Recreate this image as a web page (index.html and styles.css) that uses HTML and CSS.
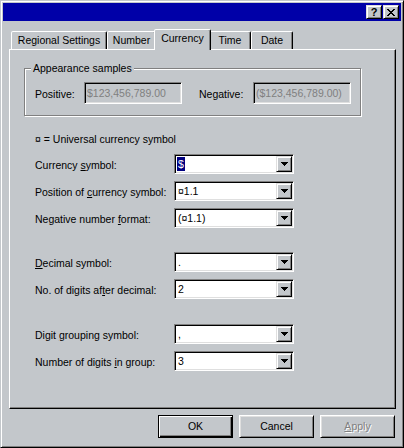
FILE: index.html
```html
<!DOCTYPE html>
<html>
<head>
<meta charset="utf-8">
<title>Regional Settings Properties</title>
<link rel="stylesheet" href="styles.css">
</head>
<body>
<div class="window">
  <div class="titlebar">
    <div class="cap-btn help">?</div>
    <div class="cap-btn close">
      <svg width="8" height="7" viewBox="0 0 8 7" shape-rendering="crispEdges"><path d="M0 0h2v1H0z M6 0h2v1H6z M1 1h2v1H1z M5 1h2v1H5z M2 2h4v1H2z M3 3h2v1H3z M2 4h4v1H2z M1 5h2v1H1z M5 5h2v1H5z M0 6h2v1H0z M6 6h2v1H6z" fill="#000"/></svg>
    </div>
  </div>
  <div class="content">
    <div class="tabs">
      <div class="tab w-regional">Regional Settings</div>
      <div class="tab w-number">Number</div>
      <div class="tab w-currency selected">Currency</div>
      <div class="tab w-time">Time</div>
      <div class="tab w-date">Date</div>
    </div>
    <div class="panel">
      <div class="group">
        <div class="legend">Appearance samples</div>
        <div class="samples">
          <span class="lbl-pos">Positive:</span>
          <div class="field">$123,456,789.00</div>
          <span class="lbl-neg">Negative:</span>
          <div class="field">($123,456,789.00)</div>
        </div>
      </div>
      <div class="note">¤ = Universal currency symbol</div>

      <div class="set first">
        <div class="row"><span class="lbl">Currency <u>s</u>ymbol:</span><div class="combo"><span class="val"><span class="sel">$</span></span><span class="drop"><svg width="7" height="4" viewBox="0 0 7 4" shape-rendering="crispEdges"><path d="M0 0h7v1H0z M1 1h5v1H1z M2 2h3v1H2z M3 3h1v1H3z" fill="#000"/></svg></span></div></div>
        <div class="row"><span class="lbl">Position of <u>c</u>urrency symbol:</span><div class="combo"><span class="val">¤1.1</span><span class="drop"><svg width="7" height="4" viewBox="0 0 7 4" shape-rendering="crispEdges"><path d="M0 0h7v1H0z M1 1h5v1H1z M2 2h3v1H2z M3 3h1v1H3z" fill="#000"/></svg></span></div></div>
        <div class="row"><span class="lbl">Negative number <u>f</u>ormat:</span><div class="combo"><span class="val">(¤1.1)</span><span class="drop"><svg width="7" height="4" viewBox="0 0 7 4" shape-rendering="crispEdges"><path d="M0 0h7v1H0z M1 1h5v1H1z M2 2h3v1H2z M3 3h1v1H3z" fill="#000"/></svg></span></div></div>
      </div>

      <div class="set second">
        <div class="row"><span class="lbl"><u>D</u>ecimal symbol:</span><div class="combo"><span class="val">.</span><span class="drop"><svg width="7" height="4" viewBox="0 0 7 4" shape-rendering="crispEdges"><path d="M0 0h7v1H0z M1 1h5v1H1z M2 2h3v1H2z M3 3h1v1H3z" fill="#000"/></svg></span></div></div>
        <div class="row"><span class="lbl">No. of digits af<u>t</u>er decimal:</span><div class="combo"><span class="val">2</span><span class="drop"><svg width="7" height="4" viewBox="0 0 7 4" shape-rendering="crispEdges"><path d="M0 0h7v1H0z M1 1h5v1H1z M2 2h3v1H2z M3 3h1v1H3z" fill="#000"/></svg></span></div></div>
      </div>

      <div class="set third">
        <div class="row"><span class="lbl">Digit <u>g</u>rouping symbol:</span><div class="combo"><span class="val">,</span><span class="drop"><svg width="7" height="4" viewBox="0 0 7 4" shape-rendering="crispEdges"><path d="M0 0h7v1H0z M1 1h5v1H1z M2 2h3v1H2z M3 3h1v1H3z" fill="#000"/></svg></span></div></div>
        <div class="row"><span class="lbl">Number of digits <u>i</u>n group:</span><div class="combo"><span class="val">3</span><span class="drop"><svg width="7" height="4" viewBox="0 0 7 4" shape-rendering="crispEdges"><path d="M0 0h7v1H0z M1 1h5v1H1z M2 2h3v1H2z M3 3h1v1H3z" fill="#000"/></svg></span></div></div>
      </div>
    </div>
    <div class="buttons">
      <div class="btn default">OK</div>
      <div class="btn">Cancel</div>
      <div class="btn disabled"><u>A</u>pply</div>
    </div>
  </div>
</div>
</body>
</html>
```

FILE: styles.css
```css
* { box-sizing: border-box; }
html, body { margin: 0; padding: 0; }
body {
  width: 404px;
  height: 448px;
  overflow: hidden;
  background: #c3c7cb;
  font-family: "Liberation Sans", Arial, sans-serif;
  font-size: 10.5px;
  color: #000;
}
.window {
  width: 404px;
  height: 448px;
  background: #c3c7cb;
  border: 1px solid;
  border-color: #c3c7cb #000 #000 #c3c7cb;
  box-shadow: inset 1px 1px #fff, inset -1px -1px #808080;
  padding: 2px;
}
.titlebar {
  height: 18px;
  background: #0000a8;
  display: flex;
  justify-content: flex-end;
  align-items: center;
  gap: 1px;
  padding-right: 2px;
}
.cap-btn {
  width: 16px;
  height: 14px;
  background: #c3c7cb;
  border: 1px solid;
  border-color: #dfdfdf #000 #000 #dfdfdf;
  box-shadow: inset 1px 1px #fff, inset -1px -1px #808080;
  display: flex;
  align-items: center;
  justify-content: center;
}
.help {
  font-weight: bold;
  font-size: 11px;
  line-height: 11px;
  padding-top: 1px;
}
.close svg { display: block; }
.content { padding: 8px 0 0 6px; }
.tabs {
  position: relative;
  z-index: 1;
  display: flex;
  align-items: flex-end;
  height: 20px;
  padding-left: 2px;
}
.tab {
  height: 18px;
  border: 1px solid;
  border-bottom: none;
  border-color: #fff #000 transparent #fff;
  border-radius: 2px 2px 0 0;
  box-shadow: inset -1px 0 #808080;
  text-align: center;
  line-height: 17px;
  white-space: nowrap;
  background: #c3c7cb;
}
.w-regional { width: 96px; }
.w-number { width: 49px; }
.w-currency { width: 53px; }
.w-time { width: 42px; }
.w-date { width: 42px; }
.tab.selected {
  height: 21px;
  margin: 0 -2px -1px;
  width: 57px;
  z-index: 2;
  line-height: 16px;
}
.panel {
  width: 387px;
  height: 360px;
  border: 1px solid;
  border-color: #fff #000 #000 #fff;
  box-shadow: inset -1px -1px #808080;
  overflow: hidden;
}
.group {
  margin: 18px 0 0 14px;
  width: 337px;
  height: 48px;
  border: 1px solid #808080;
  box-shadow: 1px 1px 0 #fff, inset 1px 1px 0 #fff;
}
.legend {
  display: block;
  width: fit-content;
  margin: -7px 0 0 6px;
  padding: 0 2px;
  background: #c3c7cb;
  height: 13px;
  line-height: 13px;
}
.samples {
  display: flex;
  align-items: center;
  margin-top: 7px;
  padding-left: 10px;
}
.lbl-pos { width: 49px; padding-top: 1px; }
.lbl-neg { width: 54px; margin-left: 17px; padding-top: 1px; }
.field {
  width: 98px;
  height: 22px;
  border: 1px solid;
  border-color: #808080 #fff #fff #808080;
  box-shadow: inset 1px 1px #000, inset -1px -1px #dfdfdf;
  padding: 0 2px;
  color: #808080;
  line-height: 20px;
  white-space: nowrap;
  overflow: hidden;
}
.note {
  margin: 17px 0 0 25px;
  height: 13px;
  line-height: 13px;
}
.set {
  display: flex;
  flex-direction: column;
  gap: 7px;
}
.set.first { margin-top: 8px; }
.set.second { margin-top: 24px; }
.set.third { margin-top: 25px; }
.row {
  display: flex;
  align-items: center;
  height: 20px;
  padding-left: 25px;
}
.lbl {
  width: 139px;
  line-height: 13px;
  margin-top: 2px;
  white-space: nowrap;
}
.combo {
  width: 120px;
  height: 20px;
  display: flex;
  background: #fff;
  border: 1px solid;
  border-color: #808080 #fff #fff #808080;
  box-shadow: inset 1px 1px #000, inset -1px -1px #dfdfdf;
  padding: 1px;
}
.val {
  flex: 1;
  padding-left: 2px;
  line-height: 16px;
  white-space: nowrap;
}
.sel {
  display: inline-block;
  margin-left: -1px;
  padding: 0 1px;
  background: #000080;
  color: #fff;
  height: 14px;
  line-height: 14px;
  vertical-align: top;
  margin-top: 1px;
}
.drop {
  width: 16px;
  height: 16px;
  background: #c3c7cb;
  border: 1px solid;
  border-color: #dfdfdf #000 #000 #dfdfdf;
  box-shadow: inset 1px 1px #fff, inset -1px -1px #808080;
  display: flex;
  align-items: center;
  justify-content: center;
}
.drop svg { display: block; }
.buttons {
  display: flex;
  justify-content: flex-end;
  gap: 6px;
  width: 387px;
  padding-right: 1px;
  margin-top: 6px;
}
.btn {
  width: 75px;
  height: 23px;
  border: 1px solid;
  border-color: #fff #000 #000 #fff;
  box-shadow: inset 1px 1px #dfdfdf, inset -1px -1px #808080;
  text-align: center;
  line-height: 21px;
}
.btn.default {
  border-color: #000;
  box-shadow: inset 1px 1px #fff, inset -1px -1px #000, inset -2px -2px #808080;
}
.btn.disabled {
  color: #808080;
  text-shadow: 1px 1px 0 #fff;
}
```
